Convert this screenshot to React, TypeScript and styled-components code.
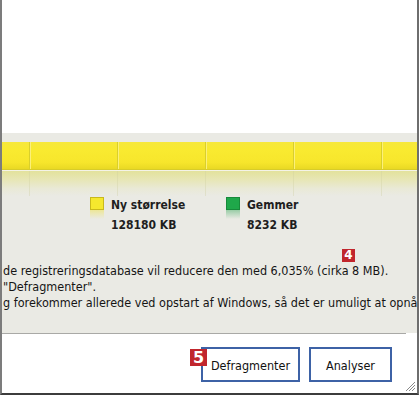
import React from "react";
import styled, { createGlobalStyle } from "styled-components";

const GlobalStyle = createGlobalStyle`
  html, body { margin: 0; padding: 0; background: #ffffff; }
  body { font-family: "DejaVu Sans Condensed", "DejaVu Sans", "Liberation Sans", sans-serif; }
  * { box-sizing: border-box; }
`;

const Window = styled.div`
  position: relative;
  width: 419px;
  height: 395px;
  display: flex;
  flex-direction: column;
  background: #ffffff;
  border-left: 2px solid #7c7c7c;
  border-right: 2px solid #6e6e6e;
  border-bottom: 2px solid #3c3c3c;
  overflow: hidden;
`;

const TopArea = styled.div`
  height: 133px;
  background: #ffffff;
  flex: none;
`;

const Panel = styled.div`
  position: relative;
  height: 200px;
  flex: none;
  background: #eaeae4;
  padding-top: 9px;
  display: flex;
  flex-direction: column;
`;

const Bar = styled.div`
  height: 28px;
  display: flex;
  background: linear-gradient(to bottom, #f6e83c 0%, #f9ea30 30%, #f7e62c 75%, #e9d924 100%);
  border-bottom: 1px solid #d8cc2a;
`;

const Segment = styled.div<{ $w: number; $first?: boolean }>`
  flex: none;
  width: ${(p) => p.$w}px;
  height: 100%;
  border-left: ${(p) => (p.$first ? "none" : "1px solid #d9cf2c")};
  box-shadow: ${(p) => (p.$first ? "none" : "inset 1px 0 0 #fbf07a")};
`;

const Highlight = styled.div`
  height: 1px;
  background: #f4f3e8;
`;

const Reflection = styled.div`
  height: 25px;
  display: flex;
  background: linear-gradient(to bottom, #e3e29c 0%, #e7e6b6 35%, #e9e9d6 70%, #eaeae4 100%);
`;

const RefSegment = styled.div<{ $w: number; $first?: boolean }>`
  flex: none;
  width: ${(p) => p.$w}px;
  height: 100%;
  border-left: ${(p) => (p.$first ? "none" : "1px solid rgba(205, 205, 160, 0.35)")};
`;

const Legend = styled.div`
  display: flex;
  padding-left: 88px;
  padding-top: 1px;
`;

const LegendItem = styled.div`
  width: 136px;
  display: flex;
  gap: 7px;
`;

const SwatchWrap = styled.div`
  display: flex;
  flex-direction: column;
`;

const Swatch = styled.div<{ $color: string; $edge: string }>`
  width: 14px;
  height: 13px;
  background: ${(p) => p.$color};
  border: 1px solid ${(p) => p.$edge};
`;

const SwatchReflect = styled.div<{ $color: string }>`
  width: 14px;
  height: 9px;
  background: linear-gradient(to bottom, ${(p) => p.$color}, rgba(234, 234, 228, 0));
  opacity: 0.45;
`;

const LegendText = styled.div`
  font-family: "DejaVu Sans Condensed", "DejaVu Sans", sans-serif;
  font-weight: bold;
  font-size: 12px;
  line-height: 20px;
  color: #1e1e1e;
  margin-top: -2px;
`;

const Message = styled.div`
  margin-top: 28px;
  padding-left: 1px;
  font-family: "DejaVu Sans Condensed", "DejaVu Sans", sans-serif;
  font-size: 12.5px;
  line-height: 16px;
  color: #151515;
  white-space: nowrap;
`;

const Badge = styled.div<{ $size: number }>`
  position: absolute;
  width: ${(p) => p.$size}px;
  height: ${(p) => p.$size}px;
  background: #c1262d;
  color: #ffffff;
  font-family: "DejaVu Sans", sans-serif;
  font-weight: bold;
  font-size: ${(p) => p.$size - 1}px;
  line-height: ${(p) => p.$size}px;
  text-align: center;
`;

const SeparatorRow = styled.div`
  height: 1px;
  flex: none;
  background: #ffffff;
`;

const Separator = styled.div`
  height: 1px;
  margin-right: 11px;
  background: #a9a9a6;
`;

const Footer = styled.div`
  position: relative;
  flex: 1;
  display: flex;
  justify-content: flex-end;
  align-items: flex-start;
  gap: 9px;
  padding-top: 13px;
  padding-right: 25px;
  background: #ffffff;
`;

const Button = styled.button<{ $w: number }>`
  width: ${(p) => p.$w}px;
  height: 35px;
  background: #ffffff;
  border: 2px solid #3d62a6;
  border-radius: 0;
  font-family: "DejaVu Sans Condensed", "DejaVu Sans", sans-serif;
  font-size: 12.5px;
  color: #111111;
  padding: 0;
  padding-top: 1px;
`;

const Grip = styled.svg`
  position: absolute;
  right: 1px;
  bottom: 1px;
`;

const barWidths = [27, 88, 88, 88, 88, 36];

export default function App() {
  return (
    <>
      <GlobalStyle />
      <Window>
        <TopArea />
        <Panel>
          <Bar>
            {barWidths.map((w, i) => (
              <Segment key={i} $w={w} $first={i === 0} />
            ))}
          </Bar>
          <Highlight />
          <Reflection>
            {barWidths.map((w, i) => (
              <RefSegment key={i} $w={w} $first={i === 0} />
            ))}
          </Reflection>
          <Legend>
            <LegendItem>
              <SwatchWrap>
                <Swatch $color="#f5e82e" $edge="#c9b91c" />
                <SwatchReflect $color="#f0e23a" />
              </SwatchWrap>
              <LegendText>
                Ny størrelse
                <br />
                128180 KB
              </LegendText>
            </LegendItem>
            <LegendItem>
              <SwatchWrap>
                <Swatch $color="#1fa84a" $edge="#178a3a" />
                <SwatchReflect $color="#36a85a" />
              </SwatchWrap>
              <LegendText>
                Gemmer
                <br />
                8232 KB
              </LegendText>
            </LegendItem>
          </Legend>
          <Message>
            de registreringsdatabase vil reducere den med 6,035% (cirka 8 MB).
            <br />
            "Defragmenter".
            <br />
            g forekommer allerede ved opstart af Windows, så det er umuligt at opnå
          </Message>
          <Badge $size={13} style={{ left: 340, top: 116 }}>4</Badge>
        </Panel>
        <SeparatorRow>
          <Separator />
        </SeparatorRow>
        <Footer>
          <Button $w={99}>Defragmenter</Button>
          <Button $w={83}>Analyser</Button>
          <Badge $size={17} style={{ left: 188, top: 15 }}>5</Badge>
          <Grip width="12" height="12" viewBox="0 0 12 12">
            <g stroke="#8a8a8a" strokeWidth="1">
              <line x1="11" y1="2" x2="2" y2="11" />
              <line x1="11" y1="5" x2="5" y2="11" />
              <line x1="11" y1="8" x2="8" y2="11" />
            </g>
          </Grip>
        </Footer>
      </Window>
    </>
  );
}
